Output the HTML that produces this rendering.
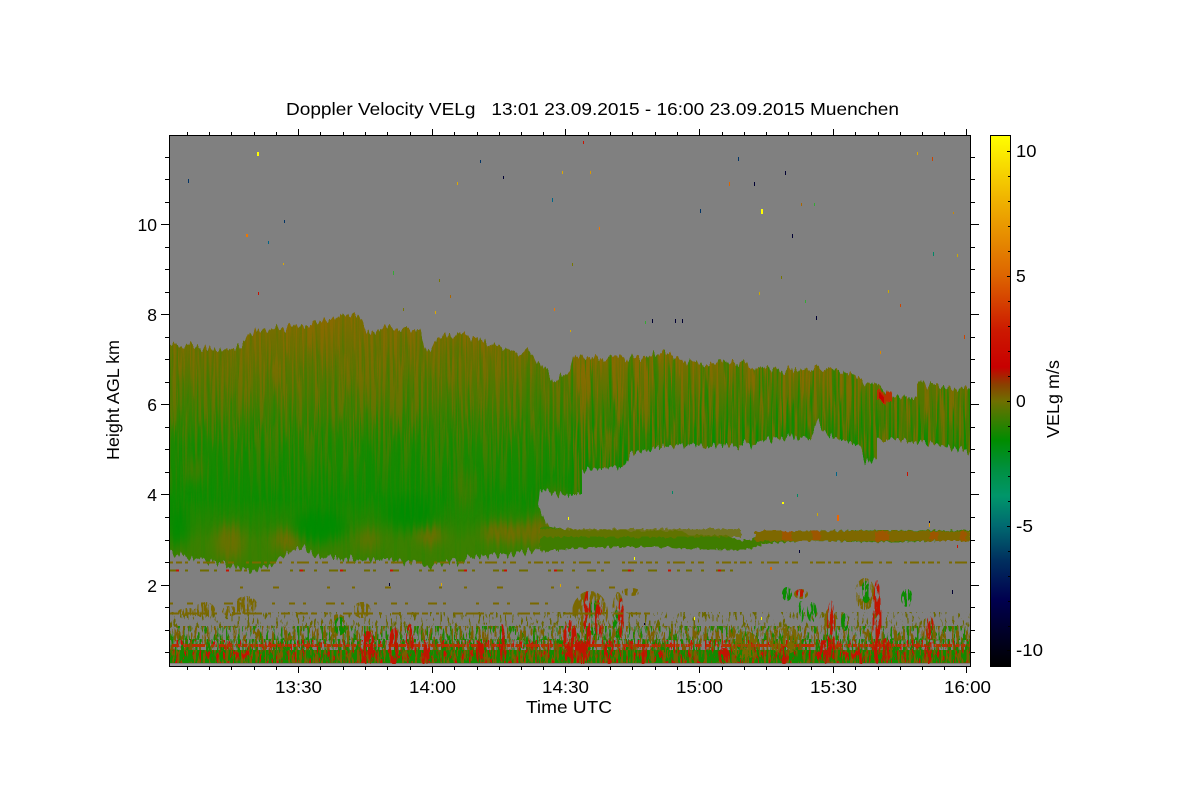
<!DOCTYPE html>
<html><head><meta charset="utf-8"><title>Doppler Velocity</title>
<style>html,body{margin:0;padding:0;background:#fff;width:1200px;height:800px;overflow:hidden}svg{display:block}text{font-family:"Liberation Sans",sans-serif;font-size:17.5px;fill:#000}</style></head>
<body>
<svg width="1200" height="800" viewBox="0 0 1200 800" xmlns="http://www.w3.org/2000/svg">
<defs>
<linearGradient id="cb" gradientUnits="userSpaceOnUse" x1="0" y1="135" x2="0" y2="666">
<stop offset="0" stop-color="#ffff00"/><stop offset=".12" stop-color="#f0b400"/><stop offset=".266" stop-color="#dd6400"/><stop offset=".37" stop-color="#cc1800"/><stop offset=".437" stop-color="#c80000"/><stop offset=".47" stop-color="#8a4000"/><stop offset=".501" stop-color="#6f6f00"/><stop offset=".575" stop-color="#008c00"/><stop offset=".63" stop-color="#009040"/><stop offset=".68" stop-color="#00966a"/><stop offset=".735" stop-color="#006a70"/><stop offset=".80" stop-color="#00305f"/><stop offset=".875" stop-color="#00004f"/><stop offset="1" stop-color="#000"/>
</linearGradient>
<linearGradient id="cl" gradientUnits="userSpaceOnUse" x1="0" y1="318" x2="0" y2="570">
<stop offset="0" stop-color="#7c6c00"/><stop offset=".12" stop-color="#6a7000"/><stop offset=".3" stop-color="#4a7a00"/><stop offset=".5" stop-color="#1c8800"/><stop offset=".72" stop-color="#0c8c00"/><stop offset=".88" stop-color="#3a8000"/><stop offset="1" stop-color="#3c7e00"/>
</linearGradient>
<linearGradient id="cr" gradientUnits="userSpaceOnUse" x1="0" y1="355" x2="0" y2="475">
<stop offset="0" stop-color="#7c6c00"/><stop offset=".3" stop-color="#587600"/><stop offset=".6" stop-color="#308000"/><stop offset="1" stop-color="#148800"/>
</linearGradient>
<linearGradient id="sfade" gradientUnits="userSpaceOnUse" x1="0" y1="320" x2="0" y2="530">
<stop offset="0" stop-color="#8a6a00" stop-opacity=".9"/><stop offset=".45" stop-color="#7a6e00" stop-opacity=".6"/><stop offset=".8" stop-color="#7a6e00" stop-opacity=".2"/><stop offset="1" stop-color="#7a6e00" stop-opacity="0"/>
</linearGradient>
<linearGradient id="sfadeR" gradientUnits="userSpaceOnUse" x1="0" y1="355" x2="0" y2="475">
<stop offset="0" stop-color="#8a6a00" stop-opacity=".95"/><stop offset="1" stop-color="#7a6e00" stop-opacity=".65"/>
</linearGradient>
<linearGradient id="gfade" gradientUnits="userSpaceOnUse" x1="0" y1="330" x2="0" y2="530">
<stop offset="0" stop-color="#009000" stop-opacity=".35"/><stop offset=".6" stop-color="#009000" stop-opacity=".85"/><stop offset="1" stop-color="#009000" stop-opacity=".3"/>
</linearGradient>
<filter id="disp" filterUnits="userSpaceOnUse" x="169" y="135" width="801" height="531" color-interpolation-filters="sRGB">
<feTurbulence type="fractalNoise" baseFrequency=".3 .004" numOctaves="2" seed="9" result="n"/>
<feColorMatrix in="n" type="matrix" values="1 0 0 0 0 0 0 0 0 .5 0 0 0 0 0 0 0 0 0 1" result="m"/>
<feDisplacementMap in="SourceGraphic" in2="m" scale="16" xChannelSelector="G" yChannelSelector="R"/>
</filter>
<filter id="disp2" filterUnits="userSpaceOnUse" x="169" y="135" width="801" height="531" color-interpolation-filters="sRGB">
<feTurbulence type="fractalNoise" baseFrequency=".3 .3" numOctaves="1" seed="5" result="n"/>
<feColorMatrix in="n" type="matrix" values="1 0 0 0 0 0 0 0 0 .5 0 0 0 0 0 0 0 0 0 1" result="m"/>
<feDisplacementMap in="SourceGraphic" in2="m" scale="6" xChannelSelector="R" yChannelSelector="R"/>
</filter>
<filter id="stA" filterUnits="userSpaceOnUse" x="169" y="135" width="801" height="531" color-interpolation-filters="sRGB">
<feTurbulence type="fractalNoise" baseFrequency=".42 .014" numOctaves="2" seed="7" result="n"/>
<feColorMatrix in="n" type="matrix" values="0 0 0 0 0 0 0 0 0 0 0 0 0 0 0 10 0 0 0 -4.7" result="m"/>
<feComposite in="SourceGraphic" in2="m" operator="in"/>
</filter>
<filter id="stB" filterUnits="userSpaceOnUse" x="169" y="135" width="801" height="531" color-interpolation-filters="sRGB">
<feTurbulence type="fractalNoise" baseFrequency=".38 .012" numOctaves="2" seed="21" result="n"/>
<feColorMatrix in="n" type="matrix" values="0 0 0 0 0 0 0 0 0 0 0 0 0 0 0 10 0 0 0 -5.4" result="m"/>
<feComposite in="SourceGraphic" in2="m" operator="in"/>
</filter>
<filter id="c60" filterUnits="userSpaceOnUse" x="169" y="135" width="801" height="531" color-interpolation-filters="sRGB">
<feTurbulence type="fractalNoise" baseFrequency=".42 .07" numOctaves="3" seed="2" result="n"/>
<feColorMatrix in="n" type="matrix" values="0 0 0 0 0 0 0 0 0 0 0 0 0 0 0 22 0 0 0 -10" result="m"/>
<feComposite in="SourceGraphic" in2="m" operator="in"/>
</filter>
<filter id="c85" filterUnits="userSpaceOnUse" x="169" y="135" width="801" height="531" color-interpolation-filters="sRGB">
<feTurbulence type="fractalNoise" baseFrequency=".42 .05" numOctaves="3" seed="4" result="n"/>
<feColorMatrix in="n" type="matrix" values="0 0 0 0 0 0 0 0 0 0 0 0 0 0 0 22 0 0 0 -8.8" result="m"/>
<feComposite in="SourceGraphic" in2="m" operator="in"/>
</filter>
<filter id="c50" filterUnits="userSpaceOnUse" x="169" y="135" width="801" height="531" color-interpolation-filters="sRGB">
<feTurbulence type="fractalNoise" baseFrequency=".42 .05" numOctaves="3" seed="11" result="n"/>
<feColorMatrix in="n" type="matrix" values="0 0 0 0 0 0 0 0 0 0 0 0 0 0 0 22 0 0 0 -10.8" result="m"/>
<feComposite in="SourceGraphic" in2="m" operator="in"/>
</filter>
<filter id="c50b" filterUnits="userSpaceOnUse" x="169" y="135" width="801" height="531" color-interpolation-filters="sRGB">
<feTurbulence type="fractalNoise" baseFrequency=".42 .06" numOctaves="3" seed="43" result="n"/>
<feColorMatrix in="n" type="matrix" values="0 0 0 0 0 0 0 0 0 0 0 0 0 0 0 22 0 0 0 -11.2" result="m"/>
<feComposite in="SourceGraphic" in2="m" operator="in"/>
</filter>
<filter id="c25" filterUnits="userSpaceOnUse" x="169" y="135" width="801" height="531" color-interpolation-filters="sRGB">
<feTurbulence type="fractalNoise" baseFrequency=".42 .06" numOctaves="3" seed="17" result="n"/>
<feColorMatrix in="n" type="matrix" values="0 0 0 0 0 0 0 0 0 0 0 0 0 0 0 22 0 0 0 -12.2" result="m"/>
<feComposite in="SourceGraphic" in2="m" operator="in"/>
</filter>
<filter id="c25b" filterUnits="userSpaceOnUse" x="169" y="135" width="801" height="531" color-interpolation-filters="sRGB">
<feTurbulence type="fractalNoise" baseFrequency=".42 .07" numOctaves="3" seed="37" result="n"/>
<feColorMatrix in="n" type="matrix" values="0 0 0 0 0 0 0 0 0 0 0 0 0 0 0 22 0 0 0 -12.2" result="m"/>
<feComposite in="SourceGraphic" in2="m" operator="in"/>
</filter>
<filter id="c10" filterUnits="userSpaceOnUse" x="169" y="135" width="801" height="531" color-interpolation-filters="sRGB">
<feTurbulence type="fractalNoise" baseFrequency=".42 .1" numOctaves="3" seed="29" result="n"/>
<feColorMatrix in="n" type="matrix" values="0 0 0 0 0 0 0 0 0 0 0 0 0 0 0 22 0 0 0 -13.4" result="m"/>
<feComposite in="SourceGraphic" in2="m" operator="in"/>
</filter>
<filter id="bl"><feGaussianBlur stdDeviation="6"/></filter>
<clipPath id="plot"><rect x="169" y="135" width="801" height="531"/></clipPath>
<clipPath id="lc"><path d="M169 343L180 345 205 349 240 348 250 335 258 330 285 327 315 323 340 318 350 316 360 317 367 335 375 332 385 326 400 330 420 330 427 355 432 345 440 336 470 336 510 350 530 352 550 375 553 382 571 372 571 495 555 494 540 489 538 505 545 520 548 528 571 531 571 547 540 550 500 556 470 558 430 566 400 560 340 558 315 556 305 548 295 548 285 555 270 566 250 571 215 562 190 557 169 553Z"/></clipPath>
<clipPath id="rc"><path d="M570 373L573 357 640 358 660 352 690 362 740 362 760 370 785 372 800 368 830 368 850 375 870 383 888 392 888 397 917 397 917 383 945 386 970 390 970 453 950 447 925 442 903 440 877 440 877 461 865 460 860 447 845 440 830 437 818 422 810 437 790 437 740 446 680 445 660 447 630 455 623 468 600 468 582 470 582 495 570 495Z"/></clipPath>
</defs>
<rect width="1200" height="800" fill="#fff"/>
<rect x="169" y="135" width="801" height="531" fill="#808080"/>
<g clip-path="url(#plot)">
<!-- cloud body, jagged by vertical displacement -->
<g filter="url(#disp)">
<g clip-path="url(#lc)">
<rect x="169" y="310" width="403" height="265" fill="url(#cl)"/>
<g filter="url(#bl)" fill="#7a6a00">
<ellipse cx="230" cy="542" rx="13" ry="18" opacity=".8"/><ellipse cx="287" cy="540" rx="14" ry="10" opacity=".9"/><ellipse cx="430" cy="535" rx="13" ry="8" opacity="1"/><ellipse cx="505" cy="533" rx="24" ry="9" opacity="1"/><ellipse cx="540" cy="532" rx="16" ry="14" opacity=".9"/><ellipse cx="368" cy="538" rx="12" ry="10" opacity=".6"/><ellipse cx="194" cy="470" rx="5" ry="13" opacity=".8"/><ellipse cx="465" cy="490" rx="10" ry="20" opacity=".4"/><ellipse cx="555" cy="505" rx="12" ry="18" opacity=".55"/>
</g>
<g filter="url(#bl)" fill="#008c00"><ellipse cx="178" cy="525" rx="10" ry="22"/><ellipse cx="320" cy="525" rx="26" ry="18"/><ellipse cx="410" cy="512" rx="26" ry="16"/></g>
<rect x="169" y="310" width="403" height="265" fill="url(#sfade)" filter="url(#stA)"/>
<rect x="169" y="310" width="403" height="265" fill="url(#gfade)" filter="url(#stB)" opacity=".4"/>
</g>
<g clip-path="url(#rc)">
<rect x="570" y="345" width="400" height="155" fill="url(#cr)"/>
<rect x="880" y="380" width="90" height="80" fill="#5a7400" opacity=".55"/>
<rect x="570" y="345" width="400" height="155" fill="url(#sfadeR)" filter="url(#stA)"/>
<rect x="570" y="345" width="400" height="155" fill="url(#gfade)" filter="url(#stB)"/>
</g>
<path d="M877 392h15v10h-15z" fill="#b83000"/><path d="M879 395h5v6h-5z" fill="#c80000"/>
</g>
<!-- 3 km band -->
<g filter="url(#disp2)">
<path d="M540 526L570 530 680 531 690 535 725 535 738 540 750 540 760 533 790 531 970 530 970 541 940 541 900 542 800 541 770 543 750 549 735 550 690 549 670 547 600 547 570 549 540 551Z" fill="#3f7c00"/>
<path d="M540 529h200v8H540z" fill="#6e7000" opacity=".75"/>
<path d="M755 531h215v10H755z" fill="#7e6800"/>
<path d="M782 531h10v9h-10zM812 531h8v9h-8zM875 532h14v9h-14zM930 531h8v9h-8zM960 532h6v8h-6z" fill="#a85000" opacity=".75"/>
</g>
<!-- clutter -->
<path d="M169 650h801v13H169z" fill="#128a00"/>
<path d="M169 650h801v13H169z" fill="#7c5c00" filter="url(#c50b)"/>
<path d="M169 639h801v11H169z" fill="#148800" filter="url(#c50)"/>
<path d="M169 639h801v11H169z" fill="#7c5c00" filter="url(#c25b)"/>
<path d="M169 626h801v14H169z" fill="#1c8600" filter="url(#c25)"/>
<path d="M169 626h801v14H169z" fill="#7c6000" filter="url(#c25b)"/>
<path d="M169 612h801v16H169z" fill="#6b6800" filter="url(#c10)"/>
<path d="M169 640h801v23H169z" fill="#c81000" filter="url(#c10)"/>
<!-- red line -->
<path d="M172 644h798v3H172z" fill="#b83000" filter="url(#c85)"/>
<!-- blobs -->
<g filter="url(#c60)" fill="#7a6800">
<ellipse cx="246" cy="605" rx="11" ry="9"/><ellipse cx="205" cy="610" rx="10" ry="8"/><ellipse cx="188" cy="612" rx="10" ry="4"/><ellipse cx="230" cy="611" rx="8" ry="5"/><ellipse cx="362" cy="610" rx="9" ry="8"/><ellipse cx="338" cy="625" rx="9" ry="11"/>
<ellipse cx="590" cy="613" rx="18" ry="22"/><ellipse cx="618" cy="614" rx="6" ry="22"/><ellipse cx="631" cy="592" rx="9" ry="4"/><ellipse cx="865" cy="594" rx="10" ry="16"/><ellipse cx="801" cy="594" rx="7" ry="5"/><ellipse cx="830" cy="622" rx="6" ry="14"/><ellipse cx="785" cy="640" rx="16" ry="14"/><ellipse cx="745" cy="645" rx="14" ry="14"/>
</g>
<g filter="url(#c60)" fill="#0a8c00">
<ellipse cx="340" cy="626" rx="6" ry="9"/><ellipse cx="594" cy="618" rx="5" ry="18"/><ellipse cx="617" cy="624" rx="4" ry="14"/><ellipse cx="866" cy="592" rx="5" ry="11"/><ellipse cx="787" cy="594" rx="5" ry="7"/><ellipse cx="907" cy="598" rx="6" ry="9"/><ellipse cx="801" cy="612" rx="3" ry="11"/><ellipse cx="812" cy="612" rx="5" ry="10"/><ellipse cx="876" cy="620" rx="3" ry="22"/><ellipse cx="845" cy="622" rx="4" ry="9"/>
</g>
<g filter="url(#c60)" fill="#c01400">
<ellipse cx="368" cy="648" rx="7" ry="17"/><ellipse cx="394" cy="646" rx="5" ry="19"/><ellipse cx="410" cy="640" rx="4" ry="16"/><ellipse cx="425" cy="654" rx="4" ry="12"/><ellipse cx="502" cy="644" rx="3" ry="20"/><ellipse cx="480" cy="652" rx="4" ry="12"/><ellipse cx="570" cy="642" rx="7" ry="22"/><ellipse cx="587" cy="625" rx="4" ry="34"/><ellipse cx="599" cy="620" rx="4" ry="20"/><ellipse cx="582" cy="652" rx="8" ry="12"/><ellipse cx="621" cy="618" rx="3" ry="20"/><ellipse cx="609" cy="652" rx="5" ry="12"/><ellipse cx="643" cy="654" rx="4" ry="10"/><ellipse cx="724" cy="656" rx="6" ry="8"/><ellipse cx="824" cy="652" rx="8" ry="12"/><ellipse cx="831" cy="630" rx="4" ry="30"/><ellipse cx="877" cy="622" rx="4.500" ry="42"/><ellipse cx="861" cy="654" rx="4" ry="10"/><ellipse cx="886" cy="650" rx="5" ry="12"/><ellipse cx="930" cy="628" rx="4" ry="12"/><ellipse cx="928" cy="654" rx="4" ry="10"/><ellipse cx="784" cy="655" rx="5" ry="9"/><ellipse cx="800" cy="593" rx="4" ry="4"/>
</g>
<!-- rows -->
<path d="M170 562.5H970" stroke="#7a6a00" stroke-width="2" stroke-dasharray="3 3 6 3 3 9 3 3 12 6 3 4 6 12 3 3 9 3" fill="none"/>
<path d="M170 570.5H735" stroke="#6f6c00" stroke-width="2" stroke-dasharray="6 9 3 12 9 5 3 18 6 3 3 14 9 20 3 6" fill="none"/>
<path d="M176 570.5H730" stroke="#c41400" stroke-width="2" stroke-dasharray="3 47 3 71 3 37" fill="none"/>
<path d="M170 603.5H600" stroke="#7a6800" stroke-width="2" stroke-dasharray="3 14 6 8 3 20 9 6 3 30" fill="none"/>
<path d="M170 613.5H650" stroke="#7a6800" stroke-width="2" stroke-dasharray="9 6 12 3 6 8 3 15 9 3 18 6 3 10" fill="none"/>
<path d="M240 587.5H630" stroke="#7a6800" stroke-width="2" stroke-dasharray="3 30 6 48 3 22" fill="none"/>
<path d="M169 664h801v2H169z" fill="#9c9c9c"/>
<!-- spots -->
<g id="spots">
<path d="M257 152h2v4h-2z" fill="#ff0"/><path d="M188 179h1v4h-1z" fill="#036"/><path d="M284 220h1v3h-1z" fill="#036"/><path d="M246 234h2v3h-2z" fill="#e70"/><path d="M268 241h1v3h-1z" fill="#068"/><path d="M283 263h1v2h-1z" fill="#da0"/><path d="M393 271h1v4h-1z" fill="#3a3"/><path d="M258 292h1v3h-1z" fill="#c10"/><path d="M403 308h1v3h-1z" fill="#770"/><path d="M435 311h1v3h-1z" fill="#da0"/><path d="M450 295h1v3h-1z" fill="#a60"/><path d="M439 279h1v3h-1z" fill="#770"/><path d="M480 160h1v3h-1z" fill="#036"/><path d="M503 176h1v3h-1z" fill="#003"/><path d="M457 182h1v3h-1z" fill="#da0"/><path d="M583 141h1v3h-1z" fill="#c10"/><path d="M562 171h1v3h-1z" fill="#da0"/><path d="M590 171h1v3h-1z" fill="#d90"/><path d="M552 198h1v4h-1z" fill="#068"/><path d="M599 227h1v3h-1z" fill="#e70"/><path d="M572 263h1v3h-1z" fill="#770"/><path d="M554 308h1v3h-1z" fill="#e70"/><path d="M645 321h1v3h-1z" fill="#3a3"/><path d="M652 319h1v4h-1z" fill="#003"/><path d="M675 319h1v4h-1z" fill="#003"/><path d="M682 319h1v4h-1z" fill="#003"/><path d="M738 157h1v4h-1z" fill="#036"/><path d="M729 182h1v4h-1z" fill="#d60"/><path d="M754 182h1v4h-1z" fill="#003"/><path d="M785 171h1v4h-1z" fill="#003"/><path d="M700 209h1v4h-1z" fill="#036"/><path d="M761 209h2v5h-2z" fill="#ff0"/><path d="M801 203h1v3h-1z" fill="#a60"/><path d="M814 203h1v3h-1z" fill="#3a3"/><path d="M792 234h1v4h-1z" fill="#003"/><path d="M759 292h1v3h-1z" fill="#ca0"/><path d="M805 300h1v3h-1z" fill="#3a3"/><path d="M816 316h1v4h-1z" fill="#003"/><path d="M781 276h1v3h-1z" fill="#770"/><path d="M917 152h1v3h-1z" fill="#da0"/><path d="M932 157h1v4h-1z" fill="#c40"/><path d="M953 212h1v2h-1z" fill="#c80"/><path d="M888 290h1v3h-1z" fill="#ca0"/><path d="M900 304h1v3h-1z" fill="#c40"/><path d="M964 335h1v4h-1z" fill="#c40"/><path d="M933 252h1v4h-1z" fill="#086"/><path d="M957 254h1v3h-1z" fill="#ca0"/><path d="M880 351h1v3h-1z" fill="#d80"/><path d="M836 472h1v4h-1z" fill="#068"/><path d="M907 472h1v4h-1z" fill="#c10"/><path d="M672 491h1v3h-1z" fill="#086"/><path d="M797 494h1v3h-1z" fill="#086"/><path d="M782 502h2v2h-2z" fill="#ff0"/><path d="M817 513h1v3h-1z" fill="#ca0"/><path d="M837 515h2v6h-2z" fill="#e60"/><path d="M929 521h1v4h-1z" fill="#003"/><path d="M929 523h1v4h-1z" fill="#d90"/><path d="M568 517h1v3h-1z" fill="#ff0"/><path d="M957 545h1v3h-1z" fill="#c10"/><path d="M799 550h1v3h-1z" fill="#003"/><path d="M770 567h2v3h-2z" fill="#d60"/><path d="M952 590h1v4h-1z" fill="#003"/><path d="M761 617h1v3h-1z" fill="#ff0"/><path d="M694 617h1v3h-1z" fill="#ff0"/><path d="M644 623h1v2h-1z" fill="#003"/><path d="M560 584h1v3h-1z" fill="#da0"/><path d="M441 583h1v3h-1z" fill="#da0"/><path d="M389 583h1v3h-1z" fill="#003"/><path d="M634 557h1v3h-1z" fill="#ff0"/><path d="M570 330h1v2h-1z" fill="#da0"/>
</g>
</g>
<!-- frame and ticks -->
<g shape-rendering="crispEdges" fill="none" stroke="#000" stroke-width="1">
<rect x="169.5" y="135.5" width="801" height="531"/>
<path d="M169 652.5h-4M169 630.5h-4M169 607.5h-4M169 585.5h-8M169 562.5h-4M169 540.5h-4M169 517.5h-4M169 494.5h-8M169 472.5h-4M169 449.5h-4M169 427.5h-4M169 404.5h-8M169 382.5h-4M169 359.5h-4M169 337.5h-4M169 314.5h-8M169 292.5h-4M169 269.5h-4M169 247.5h-4M169 224.5h-8M169 202.5h-4M169 179.5h-4M169 157.5h-4"/>
<path d="M971 652.5h4M971 630.5h4M971 607.5h4M971 585.5h8M971 562.5h4M971 540.5h4M971 517.5h4M971 494.5h8M971 472.5h4M971 449.5h4M971 427.5h4M971 404.5h8M971 382.5h4M971 359.5h4M971 337.5h4M971 314.5h8M971 292.5h4M971 269.5h4M971 247.5h4M971 224.5h8M971 202.5h4M971 179.5h4M971 157.5h4"/>
<path d="M187.500 135v-3M209.500 135v-3M231.500 135v-3M254.500 135v-3M276.500 135v-3M298.500 135v-6M320.500 135v-3M343.500 135v-3M365.500 135v-3M387.500 135v-3M410.500 135v-3M432.500 135v-6M454.500 135v-3M477.500 135v-3M499.500 135v-3M521.500 135v-3M543.500 135v-3M565.500 135v-6M588.500 135v-3M610.500 135v-3M632.500 135v-3M655.500 135v-3M677.500 135v-3M699.500 135v-6M722.500 135v-3M744.500 135v-3M766.500 135v-3M788.500 135v-3M811.500 135v-3M833.500 135v-6M855.500 135v-3M878.500 135v-3M900.500 135v-3M922.500 135v-3M944.500 135v-3M966.500 135v-6"/>
<path d="M187.500 667v3M209.500 667v3M231.500 667v3M254.500 667v3M276.500 667v3M298.500 667v6M320.500 667v3M343.500 667v3M365.500 667v3M387.500 667v3M410.500 667v3M432.500 667v6M454.500 667v3M477.500 667v3M499.500 667v3M521.500 667v3M543.500 667v3M565.500 667v6M588.500 667v3M610.500 667v3M632.500 667v3M655.500 667v3M677.500 667v3M699.500 667v6M722.500 667v3M744.500 667v3M766.500 667v3M788.500 667v3M811.500 667v3M833.500 667v6M855.500 667v3M878.500 667v3M900.500 667v3M922.500 667v3M944.500 667v3M966.500 667v6"/>
</g>
<!-- colorbar -->
<rect x="990" y="135" width="20" height="531" fill="url(#cb)"/>
<g shape-rendering="crispEdges" fill="none" stroke="#000" stroke-width="1">
<rect x="990.500" y="135.500" width="20" height="531"/>
<path d="M1010 151.500h-3M1010 176.500h-2M1010 201.500h-2M1010 226.500h-2M1010 251.500h-2M1010 276.500h-3M1010 301.500h-2M1010 326.500h-2M1010 351.500h-2M1010 376.500h-2M1010 401.500h-3M1010 426.500h-2M1010 451.500h-2M1010 476.500h-2M1010 501.500h-2M1010 526.500h-3M1010 551.500h-2M1010 576.500h-2M1010 601.500h-2M1010 626.500h-2M1010 650.500h-3"/>
</g>
<!-- text -->
<text x="286" y="115" textLength="613" lengthAdjust="spacingAndGlyphs" xml:space="preserve">Doppler Velocity VELg   13:01 23.09.2015 - 16:00 23.09.2015 Muenchen</text>
<text x="275" y="693" textLength="47" lengthAdjust="spacingAndGlyphs">13:30</text>
<text x="409" y="693" textLength="47" lengthAdjust="spacingAndGlyphs">14:00</text>
<text x="542" y="693" textLength="47" lengthAdjust="spacingAndGlyphs">14:30</text>
<text x="676" y="693" textLength="47" lengthAdjust="spacingAndGlyphs">15:00</text>
<text x="810" y="693" textLength="47" lengthAdjust="spacingAndGlyphs">15:30</text>
<text x="944" y="693" textLength="47" lengthAdjust="spacingAndGlyphs">16:00</text>
<text x="526" y="713" textLength="86" lengthAdjust="spacingAndGlyphs">Time UTC</text>
<text x="157" y="231" text-anchor="end">10</text>
<text x="157" y="321" text-anchor="end">8</text>
<text x="157" y="411" text-anchor="end">6</text>
<text x="157" y="501" text-anchor="end">4</text>
<text x="157" y="592" text-anchor="end">2</text>
<text transform="translate(119,460) rotate(-90)" textLength="120" lengthAdjust="spacingAndGlyphs">Height AGL km</text>
<text x="1016" y="157" textLength="20.500" lengthAdjust="spacingAndGlyphs">10</text>
<text x="1016" y="282">5</text>
<text x="1016" y="407">0</text>
<text x="1016" y="532" textLength="17" lengthAdjust="spacingAndGlyphs">-5</text>
<text x="1016" y="656" textLength="27" lengthAdjust="spacingAndGlyphs">-10</text>
<text transform="translate(1059,438) rotate(-90)" textLength="78" lengthAdjust="spacingAndGlyphs">VELg m/s</text>
</svg>
</body></html>
